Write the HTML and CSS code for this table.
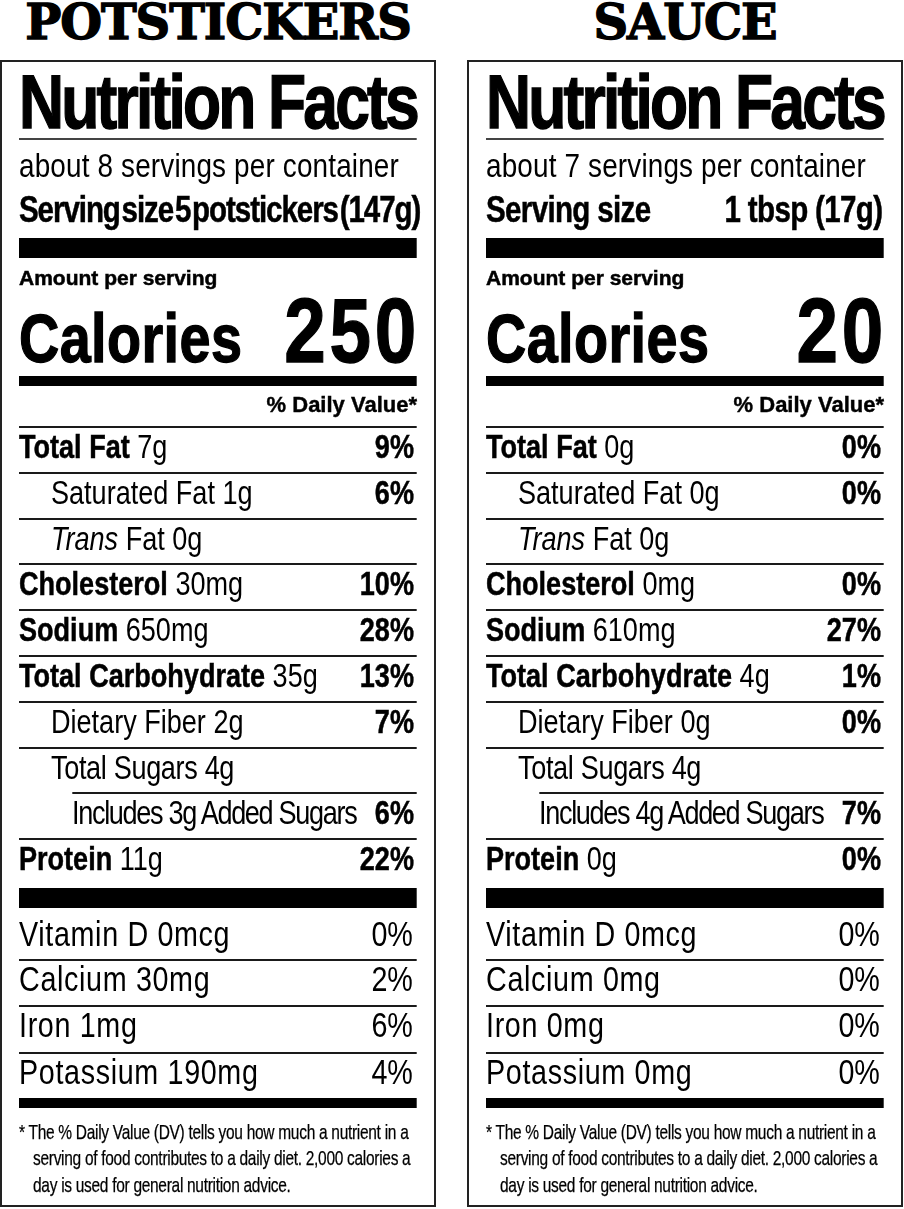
FILE: index.html
```html
<!DOCTYPE html>
<html lang="en">
<head>
<meta charset="utf-8">
<title>Nutrition Facts</title>
<link rel="stylesheet" href="styles.css">
</head>
<body>
<div class="page">
  <section class="panel">
    <h2 class="title">POTSTICKERS</h2>
    <div class="label">
      <div class="sheet">
        <h1 class="nf">Nutrition Facts</h1>
        <p class="servings">about 8 servings per container</p>
        <p class="size size-tight"><span>Serving size</span> <span>5 potstickers (147g)</span></p>
        <div class="bar bar-lg"></div>
        <p class="amount">Amount per serving</p>
        <div class="cal"><span class="cal-l">Calories</span><span class="cal-n">250</span></div>
        <div class="bar bar-md"></div>
        <div class="dv">% Daily Value*</div>
        <div class="row"><span><b>Total Fat</b> 7g</span><b class="pct">9%</b></div>
        <div class="row in1"><span>Saturated Fat 1g</span><b class="pct">6%</b></div>
        <div class="row in1"><span><i>Trans</i> Fat 0g</span></div>
        <div class="row"><span><b>Cholesterol</b> 30mg</span><b class="pct">10%</b></div>
        <div class="row"><span><b>Sodium</b> 650mg</span><b class="pct">28%</b></div>
        <div class="row"><span><b>Total Carbohydrate</b> 35g</span><b class="pct">13%</b></div>
        <div class="row in1"><span>Dietary Fiber 2g</span><b class="pct">7%</b></div>
        <div class="row in1"><span class="snug">Total Sugars 4g</span></div>
        <div class="row in2"><span class="squeeze">Includes 3g Added Sugars</span><b class="pct">6%</b></div>
        <div class="row row-last"><span><b>Protein</b> 11g</span><b class="pct">22%</b></div>
        <div class="bar bar-lg2"></div>
        <div class="vrow vfirst"><span>Vitamin D 0mcg</span><span class="vpct">0%</span></div>
        <div class="vrow"><span>Calcium 30mg</span><span class="vpct">2%</span></div>
        <div class="vrow"><span>Iron 1mg</span><span class="vpct">6%</span></div>
        <div class="vrow"><span>Potassium 190mg</span><span class="vpct">4%</span></div>
        <div class="bar bar-end"></div>
        <p class="foot">* The % Daily Value (DV) tells you how much a nutrient in a<br>serving of food contributes to a daily diet. 2,000 calories a<br>day is used for general nutrition advice.</p>
      </div>
    </div>
  </section>

  <section class="panel">
    <h2 class="title">SAUCE</h2>
    <div class="label">
      <div class="sheet">
        <h1 class="nf">Nutrition Facts</h1>
        <p class="servings">about 7 servings per container</p>
        <p class="size size-split"><span>Serving size</span><span>1 tbsp (17g)</span></p>
        <div class="bar bar-lg"></div>
        <p class="amount">Amount per serving</p>
        <div class="cal"><span class="cal-l">Calories</span><span class="cal-n">20</span></div>
        <div class="bar bar-md"></div>
        <div class="dv">% Daily Value*</div>
        <div class="row"><span><b>Total Fat</b> 0g</span><b class="pct">0%</b></div>
        <div class="row in1"><span>Saturated Fat 0g</span><b class="pct">0%</b></div>
        <div class="row in1"><span><i>Trans</i> Fat 0g</span></div>
        <div class="row"><span><b>Cholesterol</b> 0mg</span><b class="pct">0%</b></div>
        <div class="row"><span><b>Sodium</b> 610mg</span><b class="pct">27%</b></div>
        <div class="row"><span><b>Total Carbohydrate</b> 4g</span><b class="pct">1%</b></div>
        <div class="row in1"><span>Dietary Fiber 0g</span><b class="pct">0%</b></div>
        <div class="row in1"><span class="snug">Total Sugars 4g</span></div>
        <div class="row in2"><span class="squeeze">Includes 4g Added Sugars</span><b class="pct">7%</b></div>
        <div class="row row-last"><span><b>Protein</b> 0g</span><b class="pct">0%</b></div>
        <div class="bar bar-lg2"></div>
        <div class="vrow vfirst"><span>Vitamin D 0mcg</span><span class="vpct">0%</span></div>
        <div class="vrow"><span>Calcium 0mg</span><span class="vpct">0%</span></div>
        <div class="vrow"><span>Iron 0mg</span><span class="vpct">0%</span></div>
        <div class="vrow"><span>Potassium 0mg</span><span class="vpct">0%</span></div>
        <div class="bar bar-end"></div>
        <p class="foot">* The % Daily Value (DV) tells you how much a nutrient in a<br>serving of food contributes to a daily diet. 2,000 calories a<br>day is used for general nutrition advice.</p>
      </div>
    </div>
  </section>
</div>
</body>
</html>
```

FILE: styles.css
```css
html, body {
  margin: 0;
  padding: 0;
  background: #fff;
  color: #000;
}

body {
  font-family: "Liberation Sans", Arial, sans-serif;
  overflow: hidden;
}

p, h1, h2 {
  margin: 0;
  font-weight: normal;
}

.page {
  display: flex;
  gap: 31px;
  width: 904px;
}

.panel {
  width: 436px;
  flex: none;
}

.title {
  height: 60px;
  font-family: "DejaVu Serif", "Liberation Serif", serif;
  font-weight: bold;
  font-size: 48px;
  line-height: 44px;
  letter-spacing: -1.1px;
  -webkit-text-stroke: 1.3px #000;
  text-align: center;
  white-space: nowrap;
}

.label {
  border: 2px solid #222;
  padding: 0 17px 7px;
  overflow: hidden;
}

/* The label typeface is a condensed grotesque: the sheet is set in
   Liberation Sans and condensed horizontally to Arial Narrow proportions. */
.sheet {
  width: 485.37px;
  margin-right: -87.37px;
  transform: scaleX(0.82);
  transform-origin: 0 0;
}

.nf {
  font-weight: bold;
  font-size: 76px;
  line-height: 73px;
  padding-top: 3px;
  letter-spacing: -3.4px;
  -webkit-text-stroke: 1.4px #000;
  white-space: nowrap;
  border-bottom: 2px solid #444;
}

.servings {
  font-size: 34px;
  line-height: 50px;
  letter-spacing: 0.2px;
  white-space: nowrap;
}

.size {
  font-weight: bold;
  font-size: 36px;
  line-height: 39px;
  -webkit-text-stroke: 0.5px #000;
  white-space: nowrap;
}

.size-tight {
  letter-spacing: -1.3px;
  word-spacing: -6.5px;
}

.size-split {
  display: flex;
  justify-content: space-between;
  letter-spacing: -0.8px;
  padding-right: 2px;
}

.bar {
  background: #000;
}

.bar-lg {
  height: 20px;
  margin-top: 9px;
}

.bar-lg2 {
  height: 20px;
}

.bar-md {
  height: 10px;
  margin-top: 10px;
}

.bar-end {
  height: 10px;
}

.amount {
  font-weight: bold;
  font-size: 21px;
  line-height: 24px;
  margin-top: 8px;
  -webkit-text-stroke: 0.5px #000;
  white-space: nowrap;
  transform: scaleX(1.2195);
  transform-origin: 0 0;
}

.cal {
  display: flex;
  justify-content: space-between;
  align-items: baseline;
  padding-top: 6px;
  font-weight: bold;
  -webkit-text-stroke: 1.3px #000;
}

.cal-l {
  font-size: 68px;
  line-height: 50px;
  letter-spacing: 0.5px;
}

.cal-n {
  font-size: 91px;
  line-height: 70px;
  letter-spacing: 4.5px;
  margin-right: -3.5px;
}

.dv {
  font-weight: bold;
  font-size: 22px;
  line-height: 30px;
  padding-top: 4px;
  margin-bottom: 6px;
  -webkit-text-stroke: 0.4px #000;
  text-align: right;
  white-space: nowrap;
  transform: scaleX(1.2195);
  transform-origin: 100% 0;
}

.row {
  box-sizing: border-box;
  height: 45.8px;
  border-top: 2px solid #1a1a1a;
  display: flex;
  justify-content: space-between;
  font-size: 33px;
  line-height: 37px;
  white-space: nowrap;
}

.row b {
  font-weight: bold;
  -webkit-text-stroke: 0.5px #000;
}

.row i {
  font-style: italic;
}

.in1 > span:first-child {
  padding-left: 39px;
}

.in2 {
  margin-left: 64.6px;
}

.snug {
  letter-spacing: -0.4px;
}

.squeeze {
  letter-spacing: -1.6px;
}

.row-last {
  height: 49.8px;
}

.pct {
  padding-right: 3.7px;
}

.vrow {
  box-sizing: border-box;
  height: 46.5px;
  border-top: 2px solid #1a1a1a;
  display: flex;
  justify-content: space-between;
  font-size: 35px;
  line-height: 35px;
  letter-spacing: 0.8px;
  white-space: nowrap;
}

.vfirst {
  height: 51px;
  line-height: 51px;
  border-top: 0;
}

.vpct {
  padding-right: 5px;
  letter-spacing: 0;
}

/* footnote uses an extra-condensed setting */
.foot {
  margin-top: 10.5px;
  font-size: 21px;
  line-height: 26.5px;
  padding-left: 19px;
  text-indent: -19px;
  letter-spacing: -0.4px;
  -webkit-text-stroke: 0.25px #000;
  white-space: nowrap;
  transform: scaleX(0.9);
  transform-origin: 0 0;
}
```
